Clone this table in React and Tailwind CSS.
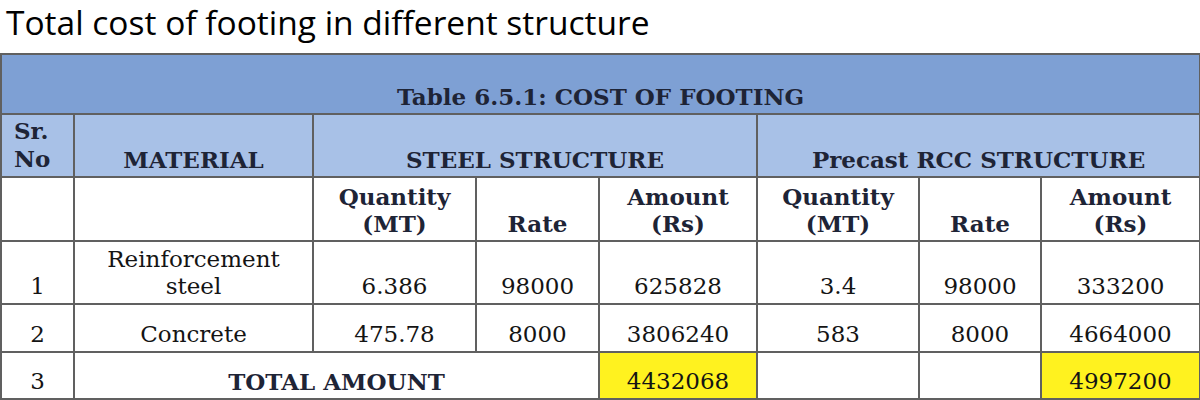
export default function App() {
  const cell = "border-2 border-[#606060] align-bottom text-center px-1 pb-[2px] leading-[1.2]";
  const rows = [
    { sr: "1", mat: ["Reinforcement", "steel"], q1: "6.386", r1: "98000", a1: "625828", q2: "3.4", r2: "98000", a2: "333200", h: "h-[63px]" },
    { sr: "2", mat: ["Concrete"], q1: "475.78", r1: "8000", a1: "3806240", q2: "583", r2: "8000", a2: "4664000", h: "h-[48px]" },
  ];

  return (
    <div className="w-[1200px] h-[400px] bg-white overflow-hidden">
      <div className="h-[53px] pl-[6px] pt-[1px]">
        <h1 className="text-[33.5px] leading-[1.3] text-black" style={{ fontFamily: '"Open Sans", sans-serif' }}>
          Total cost of footing in different structure
        </h1>
      </div>

      <table
        className="table-fixed border-collapse w-[1199px] text-[23px] text-[#141414]"
        style={{ fontFamily: '"DejaVu Serif", serif' }}
      >
        <colgroup>
          <col className="w-[73px]" />
          <col className="w-[239px]" />
          <col className="w-[163px]" />
          <col className="w-[123px]" />
          <col className="w-[158px]" />
          <col className="w-[162px]" />
          <col className="w-[122px]" />
          <col className="w-[159px]" />
        </colgroup>
        <tbody>
          <tr className="h-[60px] bg-[#7ea0d4]">
            <td colSpan={8} className={`${cell} font-bold text-[#1e2436] pb-[2px]`}>
              Table 6.5.1: COST OF FOOTING
            </td>
          </tr>

          <tr className="h-[63px] bg-[#a8c1e7] font-bold text-[#1e2436]">
            <td className={`${cell} !align-top !text-left pl-[12px] pt-[2px]`}>
              Sr.
              <br />
              No
            </td>
            <td className={cell}>MATERIAL</td>
            <td colSpan={3} className={cell}>STEEL STRUCTURE</td>
            <td colSpan={3} className={cell}>Precast RCC STRUCTURE</td>
          </tr>

          <tr className="h-[64px] font-bold text-[#1e2436]">
            <td className={cell}></td>
            <td className={cell}></td>
            <td className={cell}>Quantity<br />(MT)</td>
            <td className={cell}>Rate</td>
            <td className={cell}>Amount<br />(Rs)</td>
            <td className={cell}>Quantity<br />(MT)</td>
            <td className={cell}>Rate</td>
            <td className={cell}>Amount<br />(Rs)</td>
          </tr>

          {rows.map((r) => (
            <tr key={r.sr} className={r.h}>
              <td className={cell}>{r.sr}</td>
              <td className={cell}>
                {r.mat.map((m, i) => (
                  <div key={i}>{m}</div>
                ))}
              </td>
              <td className={cell}>{r.q1}</td>
              <td className={cell}>{r.r1}</td>
              <td className={cell}>{r.a1}</td>
              <td className={cell}>{r.q2}</td>
              <td className={cell}>{r.r2}</td>
              <td className={cell}>{r.a2}</td>
            </tr>
          ))}

          <tr className="h-[47px]">
            <td className={cell}>3</td>
            <td colSpan={3} className={`${cell} font-bold text-[#1e2436]`}>TOTAL AMOUNT</td>
            <td className={`${cell} bg-[#fff21f]`}>4432068</td>
            <td className={cell}></td>
            <td className={cell}></td>
            <td className={`${cell} bg-[#fff21f]`}>4997200</td>
          </tr>
        </tbody>
      </table>
    </div>
  );
}
